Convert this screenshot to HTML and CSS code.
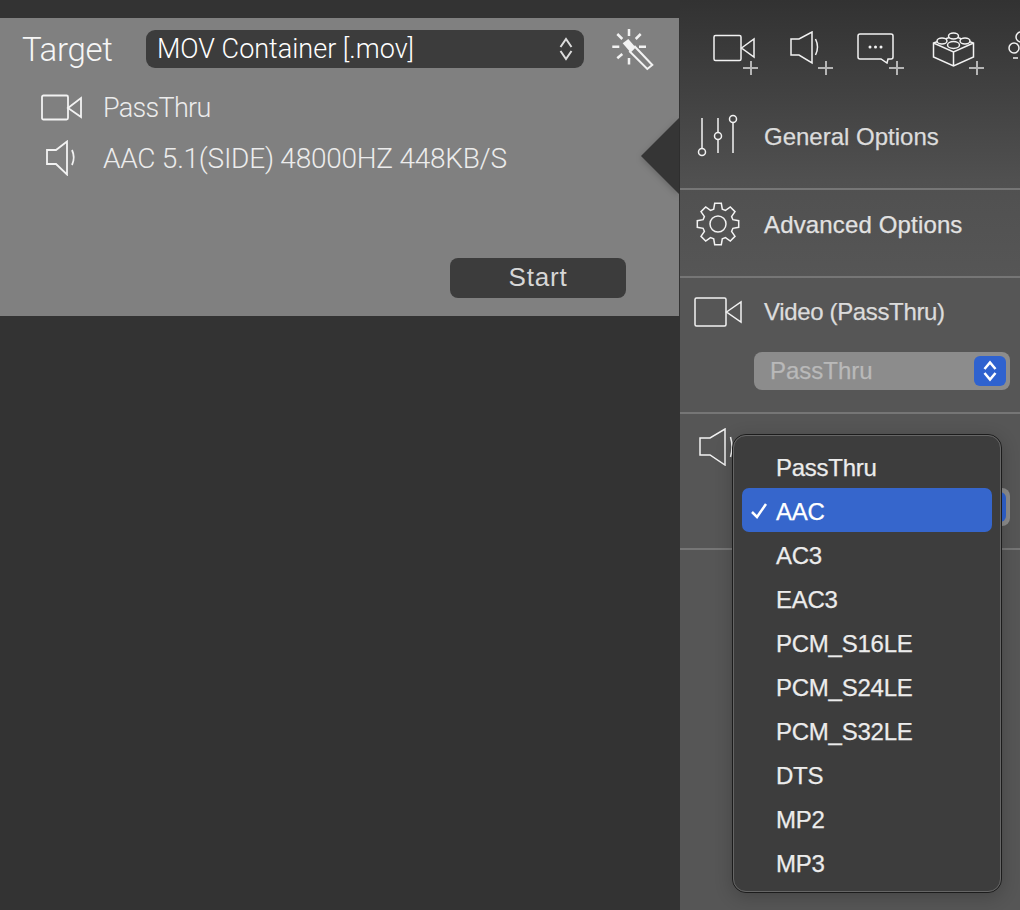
FILE: index.html
```html
<!DOCTYPE html>
<html lang="en">
<head>
<meta charset="utf-8">
<title>Target</title>
<link rel="stylesheet" href="styles.css">
</head>
<body>
<div class="app">
  <main class="main">
    <section class="card">
      <div class="card-head">
        <span class="target-label">Target</span>
        <div class="container-select">
          <span>MOV Container [.mov]</span>
          <svg class="updown" viewBox="0 0 14 26"><path d="M1.500 11L7 3l5.500 8M1.500 15L7 23l5.500-8"/></svg>
        </div>
        <svg class="wand" viewBox="0 0 44 44">
          <path class="wand-rays" d="M19 2v7M19 31v6.500M2.300 19.700h7M29 19.700h7M7.300 7l5 5M30.700 7l-5 5M7.300 31.300l5-4.300"/>
          <path class="wand-tip" d="M12.700 16.300L18.300 12 25 19.700 20 24.700z"/>
          <path class="wand-body" d="M20 24.700L25 19.700 42.300 38 37.300 42z"/>
        </svg>
      </div>
      <div class="track">
        <svg class="track-icon" viewBox="0 0 42 28"><rect x="1" y="1.500" width="26" height="24" rx="1.500"/><path d="M27 14l13-10v19z"/></svg>
        <span class="track-video-name">PassThru</span>
      </div>
      <div class="track track-audio">
        <svg class="track-icon" viewBox="0 0 42 36"><path d="M6 10h9l11-8.500v33L15 24H6z"/><path d="M31 10q3.500 7.500 0 15"/></svg>
        <span>AAC 5.1(SIDE) 48000HZ 448KB/S</span>
      </div>
      <div class="card-foot"><button class="start">Start</button></div>
      <span class="pointer"></span>
    </section>
  </main>
  <aside class="side">
    <div class="toolbar">
      <span class="tool tool-video">
        <svg viewBox="0 0 42 28"><rect x="1" y="1.500" width="27" height="25" rx="1.500"/><path d="M28.500 14L41 5v18z"/></svg>
        <i class="plus"></i>
      </span>
      <span class="tool tool-audio">
        <svg viewBox="0 0 32 34"><path d="M1 8h8L22 1v31L9 24H1z"/><path d="M25.500 8q4 8 0 16"/></svg>
        <i class="plus"></i>
      </span>
      <span class="tool tool-sub">
        <svg viewBox="0 0 37 31"><path d="M3 1h31q2 0 2 2v21q0 2-2 2h-3l-1 4-6-4H3q-2 0-2-2V3q0-2 2-2z"/><path class="dots" d="M13 14h.01M18.500 14h.01M24 14h.01"/></svg>
        <i class="plus"></i>
      </span>
      <span class="tool tool-lego">
        <svg viewBox="0 0 44 36"><path d="M1.500 12L21.500 5l20 7v14l-20 9-20-9zM1.500 12l20 9 20-9M21.500 21v14"/><ellipse class="stud" cx="21.500" cy="5" rx="5" ry="3"/><ellipse class="stud" cx="10" cy="10" rx="5" ry="3"/><ellipse class="stud" cx="33" cy="10" rx="5" ry="3"/><ellipse class="stud" cx="21.500" cy="14" rx="6" ry="3.500"/></svg>
        <i class="plus"></i>
      </span>
      <span class="tool tool-more">
        <svg viewBox="0 0 20 32"><circle cx="8" cy="18" r="5"/><circle cx="15" cy="7" r="5"/><path d="M7 28h5"/></svg>
      </span>
    </div>
    <div class="row row-general">
      <svg class="row-icon" viewBox="0 0 46 46">
        <path d="M7 4v30M23 4v14M23 26v13M38 9v30"/>
        <circle cx="7" cy="38" r="3.500"/><circle cx="23" cy="22" r="3.500"/><circle cx="38" cy="5" r="3.500"/>
      </svg>
      <span>General Options</span>
    </div>
    <div class="row row-advanced">
      <svg class="row-icon gear" viewBox="0 0 44 44">
        <circle cx="22" cy="22" r="8"/>
        <path d="M17.700 7.100L18.700 1.300H25.300L26.300 7.100 29.500 8.400 34.300 5 39 9.700 35.600 14.500 36.900 17.700 42.700 18.700V25.300L36.900 26.300 35.600 29.500 39 34.300 34.300 39 29.500 35.600 26.300 36.900 25.300 42.700H18.700L17.700 36.900 14.500 35.600 9.700 39 5 34.300 8.400 29.500 7.100 26.300 1.300 25.300V18.700L7.100 17.700 8.400 14.500 5 9.700 9.700 5 14.500 8.400z"/>
      </svg>
      <span>Advanced Options</span>
    </div>
    <div class="row row-stack">
      <div class="row-title">
        <svg class="row-icon" viewBox="0 0 50 30"><rect x="1" y="1" width="31" height="28" rx="1.500"/><path d="M32.500 15L47 5v20z"/></svg>
        <span class="video-name">Video (PassThru)</span>
      </div>
      <div class="codec-select">
        <span>PassThru</span>
        <span class="codec-btn"><svg viewBox="0 0 14 22"><path d="M1.500 9L7 2.500 12.500 9M1.500 13L7 19.500 12.500 13"/></svg></span>
      </div>
    </div>
    <div class="row row-stack">
      <div class="row-title">
        <svg class="row-icon audio-icon" viewBox="0 0 50 38"><path d="M1 10H11L26 1V37L11 27H1z"/><path d="M31.500 9q3 10 0 20"/></svg>
      </div>
      <div class="codec-select">
        <span class="codec-btn"></span>
      </div>
    </div>
    <ul class="menu">
      <li>PassThru</li>
      <li class="selected"><svg class="check" viewBox="0 0 18 16"><path d="M2 9l5 5 9-13"/></svg>AAC</li>
      <li>AC3</li>
      <li>EAC3</li>
      <li>PCM_S16LE</li>
      <li>PCM_S24LE</li>
      <li>PCM_S32LE</li>
      <li>DTS</li>
      <li>MP2</li>
      <li>MP3</li>
    </ul>
  </aside>
</div>
</body>
</html>
```

FILE: styles.css
```css
* { box-sizing: border-box; }
html, body { margin: 0; height: 100%; }
body {
  background: #333;
  color: #fff;
  font-family: "Liberation Sans", Arial, sans-serif;
  overflow: hidden;
}
svg { display: block; fill: none; stroke: #f2f2f2; stroke-width: 1.500; }
.app { display: flex; width: 1020px; height: 910px; }
.main { width: 680px; padding-top: 18px; background: #333; }

.card {
  position: relative;
  height: 298px;
  width: 679px;
  background: #808080;
  padding: 12px 0 0 22px;
}
.card-head { display: flex; align-items: center; height: 38px; }
.target-label {
  width: 124px;
  font-family: Roboto, sans-serif;
  font-weight: 300;
  font-size: 33px;
  letter-spacing: -.3px;
  color: #f6f6f6;
}
.container-select {
  display: flex;
  align-items: center;
  justify-content: space-between;
  width: 438px;
  height: 38px;
  padding: 0 11px 0 11px;
  border-radius: 9px;
  background: #3c3c3c;
  font-family: Roboto, sans-serif;
  font-weight: 300;
  font-size: 27px;
  white-space: nowrap;
}
.updown { width: 14px; height: 26px; stroke: #ddd; stroke-width: 2; }
.wand { width: 44px; height: 44px; margin-left: 26px; }
.wand-rays { stroke-width: 2.500; }
.wand-tip { fill: #f2f2f2; stroke: none; }
.wand-body { stroke-width: 2; }

.track {
  display: flex;
  align-items: center;
  height: 50px;
  margin-top: 15px;
  padding-left: 19px;
  font-family: Roboto, sans-serif;
  font-weight: 300;
  font-size: 28px;
  letter-spacing: -.25px;
  color: #ececec;
}
.track-video-name { font-size: 27px; letter-spacing: -.7px; }
.track-audio { margin-top: 0; }
.track-icon { width: 42px; height: 28px; margin-right: 20px; stroke-width: 1.800; }
.track-audio .track-icon { height: 36px; }
.card-foot { display: flex; justify-content: flex-end; margin-top: 75px; padding-right: 53px; }
.start {
  width: 176px;
  height: 40px;
  border: 0;
  padding: 0 0 2px;
  border-radius: 8px;
  background: #3c3c3c;
  color: #d6d6d6;
  font: 26px "Liberation Sans", Arial, sans-serif;
  letter-spacing: .8px;
}
.pointer {
  position: absolute;
  right: 0;
  top: 100px;
  width: 0;
  height: 0;
  border-style: solid;
  border-width: 38px 38px 38px 0;
  border-color: transparent #353535 transparent transparent;
  filter: drop-shadow(0 2px 3px rgba(0,0,0,.2));
}

.side {
  position: relative;
  width: 340px;
  height: 910px;
  background: linear-gradient(#323232 0, #505050 180px, #565656 280px, #565656 100%);
}
.toolbar { display: flex; height: 92px; padding: 30px 0 0 33px; overflow: hidden; }
.tool { position: relative; flex: none; display: block; height: 46px; }
.tool-video { width: 77px; }
.tool-video svg { width: 42px; height: 28px; margin-top: 4px; }
.tool-audio { width: 67px; }
.tool-audio svg { width: 32px; height: 34px; margin-top: 1px; }
.tool-sub { width: 75px; }
.tool-sub svg { width: 37px; height: 31px; margin-top: 3px; }
.tool-lego { width: 74px; }
.tool-lego svg { width: 44px; height: 36px; margin-top: 1px; }
.tool-more { width: 20px; }
.tool-more svg { width: 20px; height: 32px; }
.dots { stroke-width: 3; stroke-linecap: round; }
.stud { fill: #3a3a3a; }
.plus { position: absolute; left: 30px; top: 31px; width: 15px; height: 14px; }
.tool-audio .plus { left: 28px; }
.tool-sub .plus { left: 32px; }
.tool-lego .plus { left: 37px; }
.plus::before, .plus::after { content: ""; position: absolute; background: #b5b5b5; }
.plus::before { left: 0; top: 6px; width: 15px; height: 2px; }
.plus::after { left: 6.500px; top: 0; width: 2px; height: 14px; }

.row {
  display: flex;
  align-items: center;
  height: 88px;
  border-bottom: 2px solid #767676;
  padding-left: 15px;
  font-size: 24px;
  color: #dcdcdc;
  -webkit-text-stroke: .25px currentColor;
}
.row-general { height: 98px; padding-bottom: 6px; }
.row-advanced { padding-bottom: 16px; color: #e2e2e2; letter-spacing: .15px; }
.row-icon { width: 46px; height: 46px; margin-right: 23px; flex: none; }
.row-icon.gear { width: 44px; height: 44px; margin: 0 24px 2px 1px; }
.row-stack { display: block; height: 136px; padding: 0; }
.row-title { display: flex; align-items: center; height: 74px; padding: 0 0 6px 14px; }
.row-title .row-icon { width: 50px; height: 30px; margin-right: 20px; }
.video-name { letter-spacing: -.35px; }
.row-title .audio-icon { height: 38px; margin-left: 5px; margin-bottom: 2px; }
.codec-select {
  display: flex;
  align-items: center;
  justify-content: space-between;
  width: 256px;
  height: 38px;
  margin-left: 74px;
  padding: 0 4px 0 16px;
  border-radius: 8px;
  background: #8c8c8c;
  color: #b9b9b9;
  font-size: 24px;
}
.codec-btn {
  display: flex;
  align-items: center;
  justify-content: center;
  width: 32px;
  height: 30px;
  margin-left: auto;
  border-radius: 6px;
  background: #2f62cf;
}
.codec-btn svg { width: 14px; height: 22px; stroke: #fff; stroke-width: 2.500; }

.menu {
  position: absolute;
  left: 52px;
  top: 434px;
  width: 270px;
  height: 459px;
  margin: 0;
  padding: 9px 9px;
  list-style: none;
  border: 1px solid #1c1c1c;
  outline: 1px solid #666;
  outline-offset: -2px;
  border-radius: 14px;
  background: #3d3d3d;
  box-shadow: 0 4px 18px rgba(0,0,0,.2);
}
.menu li {
  position: relative;
  display: flex;
  align-items: center;
  height: 44px;
  padding: 4px 0 0 34px;
  border-radius: 7px;
  font-size: 24px;
  letter-spacing: -.25px;
  color: #ececec;
  -webkit-text-stroke: .25px currentColor;
}
.menu .selected { background: #3666cc; color: #fff; }
.check { position: absolute; left: 8px; top: 15px; width: 18px; height: 16px; stroke: #fff; stroke-width: 2.500; }
```
